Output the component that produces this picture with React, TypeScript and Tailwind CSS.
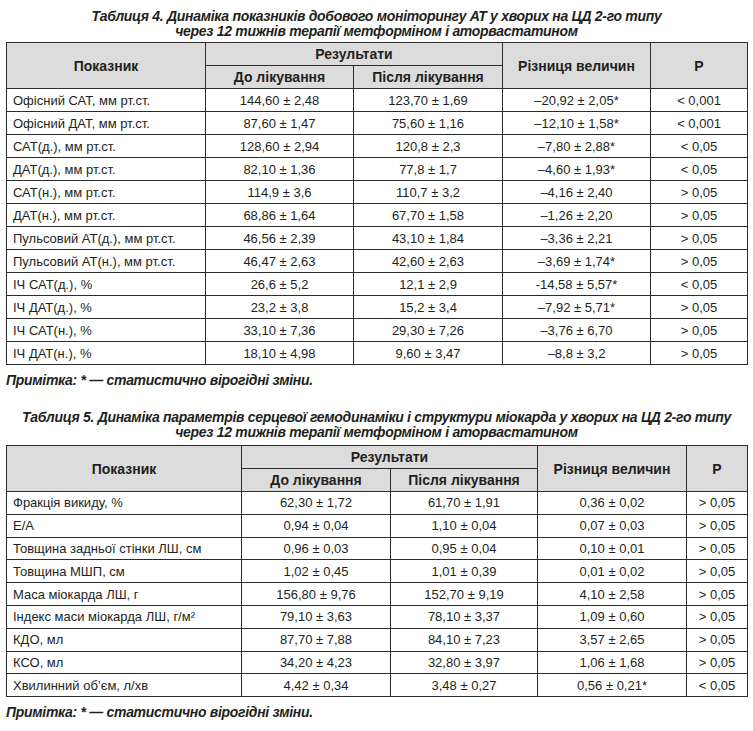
import React from 'react';

type Row = [string, string, string, string, string];

const table4: Row[] = [
    ['Офісний САТ, мм рт.ст.', '144,60 ± 2,48', '123,70 ± 1,69', '–20,92 ± 2,05*', '< 0,001'],
    ['Офісний ДАТ, мм рт.ст.', '87,60 ± 1,47', '75,60 ± 1,16', '–12,10 ± 1,58*', '< 0,001'],
    ['САТ(д.), мм рт.ст.', '128,60 ± 2,94', '120,8 ± 2,3', '–7,80 ± 2,88*', '< 0,05'],
    ['ДАТ(д.), мм рт.ст.', '82,10 ± 1,36', '77,8 ± 1,7', '–4,60 ± 1,93*', '< 0,05'],
    ['САТ(н.), мм рт.ст.', '114,9 ± 3,6', '110,7 ± 3,2', '–4,16 ± 2,40', '> 0,05'],
    ['ДАТ(н.), мм рт.ст.', '68,86 ± 1,64', '67,70 ± 1,58', '–1,26 ± 2,20', '> 0,05'],
    ['Пульсовий АТ(д.), мм рт.ст.', '46,56 ± 2,39', '43,10 ± 1,84', '–3,36 ± 2,21', '> 0,05'],
    ['Пульсовий АТ(н.), мм рт.ст.', '46,47 ± 2,63', '42,60 ± 2,63', '–3,69 ± 1,74*', '> 0,05'],
    ['ІЧ САТ(д.), %', '26,6 ± 5,2', '12,1 ± 2,9', '-14,58 ± 5,57*', '< 0,05'],
    ['ІЧ ДАТ(д.), %', '23,2 ± 3,8', '15,2 ± 3,4', '–7,92 ± 5,71*', '> 0,05'],
    ['ІЧ САТ(н.), %', '33,10 ± 7,36', '29,30 ± 7,26', '–3,76 ± 6,70', '> 0,05'],
    ['ІЧ ДАТ(н.), %', '18,10 ± 4,98', '9,60 ± 3,47', '–8,8 ± 3,2', '> 0,05'],
];

const table5: Row[] = [
    ['Фракція викиду, %', '62,30 ± 1,72', '61,70 ± 1,91', '0,36 ± 0,02', '> 0,05'],
    ['Е/А', '0,94 ± 0,04', '1,10 ± 0,04', '0,07 ± 0,03', '> 0,05'],
    ['Товщина задньої стінки ЛШ, см', '0,96 ± 0,03', '0,95 ± 0,04', '0,10 ± 0,01', '> 0,05'],
    ['Товщина МШП, см', '1,02 ± 0,45', '1,01 ± 0,39', '0,01 ± 0,02', '> 0,05'],
    ['Маса міокарда ЛШ, г', '156,80 ± 9,76', '152,70 ± 9,19', '4,10 ± 2,58', '> 0,05'],
    ['Індекс маси міокарда ЛШ, г/м²', '79,10 ± 3,63', '78,10 ± 3,37', '1,09 ± 0,60', '> 0,05'],
    ['КДО, мл', '87,70 ± 7,88', '84,10 ± 7,23', '3,57 ± 2,65', '> 0,05'],
    ['КСО, мл', '34,20 ± 4,23', '32,80 ± 3,97', '1,06 ± 1,68', '> 0,05'],
    ['Хвилинний об’єм, л/хв', '4,42 ± 0,34', '3,48 ± 0,27', '0,56 ± 0,21*', '< 0,05'],
];

const border = 'border border-[#2b2b2b] p-0 leading-none';

// condensed bold italic look for captions and notes
const capFont = "font-['Liberation_Sans',Arial,sans-serif] font-bold italic text-[14px] tracking-[-0.3px] text-[#231f20]";

function Caption({ lines }: { lines: string[] }) {
    return (
        <div className={capFont + ' text-center leading-[15px] whitespace-nowrap'}>
            {lines.map((l, i) => (
                <div key={i}>{l}</div>
            ))}
        </div>
    );
}

function Note() {
    return <div className={capFont + ' leading-[16px]'}>Примітка: * — статистично вірогідні зміни.</div>;
}

function DataTable({ rows, widths, rowH }: { rows: Row[]; widths: number[]; rowH: string }) {
    const cell = border + ' ' + rowH;
    const head = border + ' h-[23px] bg-[#dcdcdc] font-bold text-center text-[14px]';
    return (
        <table className="table-fixed border-collapse w-full text-[13px] text-[#231f20]">
            <colgroup>
                {widths.map((w, i) => (
                    <col key={i} style={{ width: w }} />
                ))}
            </colgroup>
            <thead>
                <tr>
                    <th rowSpan={2} className={head}>Показник</th>
                    <th colSpan={2} className={head}>Результати</th>
                    <th rowSpan={2} className={head}>Різниця величин</th>
                    <th rowSpan={2} className={head}>P</th>
                </tr>
                <tr>
                    <th className={head}>До лікування</th>
                    <th className={head}>Після лікування</th>
                </tr>
            </thead>
            <tbody>
                {rows.map((r) => (
                    <tr key={r[0]}>
                        <td className={cell + ' pl-[6px] text-left whitespace-nowrap'}>{r[0]}</td>
                        <td className={cell + ' text-center'}>{r[1]}</td>
                        <td className={cell + ' text-center'}>{r[2]}</td>
                        <td className={cell + ' text-center'}>{r[3]}</td>
                        <td className={cell + ' text-center'}>{r[4]}</td>
                    </tr>
                ))}
            </tbody>
        </table>
    );
}

export default function App() {
    return (
        <div className="w-[753px] h-[731px] bg-white font-['Liberation_Sans',Arial,sans-serif] px-[6px] pt-[9px]">
            <Caption
                lines={[
                    'Таблиця 4. Динаміка показників добового моніторингу АТ у хворих на ЦД 2-го типу',
                    'через 12 тижнів терапії метформіном і аторвастатином',
                ]}
            />
            <div className="mt-[3px]">
                <DataTable rows={table4} widths={[199, 148, 149, 148, 97]} rowH="h-[23px]" />
            </div>
            <div className="mt-[7px]">
                <Note />
            </div>
            <div className="mt-[22px]">
                <Caption
                    lines={[
                        'Таблиця 5. Динаміка параметрів серцевої гемодинаміки і структури міокарда у хворих на ЦД 2-го типу',
                        'через 12 тижнів терапії метформіном і аторвастатином',
                    ]}
                />
            </div>
            <div className="mt-[5px]">
                <DataTable rows={table5} widths={[235, 149, 147, 149, 61]} rowH="h-[22.8px]" />
            </div>
            <div className="mt-[7px]">
                <Note />
            </div>
        </div>
    );
}
